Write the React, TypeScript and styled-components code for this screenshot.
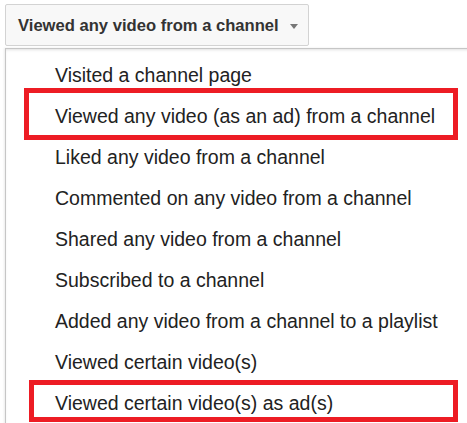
import React from "react";
import styled, { createGlobalStyle } from "styled-components";

const Global = createGlobalStyle`
  html, body { margin: 0; padding: 0; background: #fff; overflow: hidden; }
  body { font-family: "Liberation Sans", Arial, sans-serif; }
`;

const Page = styled.div`
  width: 467px;
  height: 423px;
  padding: 4px 0 0 5px;
  box-sizing: border-box;
  overflow: hidden;
`;

const Trigger = styled.button`
  display: flex;
  align-items: center;
  box-sizing: border-box;
  width: 304px;
  height: 42px;
  margin: 0;
  padding: 1px 0 0 12px;
  background: #f8f8f8;
  border: 1px solid #d3d3d3;
  border-radius: 2px;
  font-family: "Liberation Sans", Arial, sans-serif;
  font-weight: bold;
  font-size: 16.6px;
  color: #333;
  cursor: pointer;
`;

const Caret = styled.span`
  width: 0;
  height: 0;
  margin-left: 11px;
  margin-top: 1px;
  border-left: 4.5px solid transparent;
  border-right: 4.5px solid transparent;
  border-top: 5px solid #777;
`;

const Menu = styled.ul`
  list-style: none;
  margin: 2px -20px 0 0;
  padding: 6px 0 0 0;
  background: #fff;
  border-top: 1px solid #c6c6c6;
  border-left: 1px solid #c6c6c6;
  box-shadow: inset 0 2px 3px -1px rgba(0, 0, 0, 0.12), -1px 0 2px rgba(0, 0, 0, 0.08);
`;

const Item = styled.li`
  position: relative;
  height: 41px;
  line-height: 41px;
  padding-left: 49px;
  font-size: 19.5px;
  color: #222;
  white-space: nowrap;
`;

const Highlight = styled.span<{ $top: number; $left: number; $width: number; $height: number }>`
  position: absolute;
  top: ${(p) => p.$top}px;
  left: ${(p) => p.$left}px;
  width: ${(p) => p.$width}px;
  height: ${(p) => p.$height}px;
  box-sizing: border-box;
  border: 5px solid #ed1c24;
  pointer-events: none;
`;

const items: { label: string; box?: { top: number; left: number; width: number; height: number } }[] = [
  { label: "Visited a channel page" },
  { label: "Viewed any video (as an ad) from a channel", box: { top: -8, left: 18, width: 434, height: 52 } },
  { label: "Liked any video from a channel" },
  { label: "Commented on any video from a channel" },
  { label: "Shared any video from a channel" },
  { label: "Subscribed to a channel" },
  { label: "Added any video from a channel to a playlist" },
  { label: "Viewed certain video(s)" },
  { label: "Viewed certain video(s) as ad(s)", box: { top: -3, left: 23, width: 429, height: 42 } },
];

export default function App() {
  return (
    <>
      <Global />
      <Page>
        <Trigger>
          Viewed any video from a channel
          <Caret />
        </Trigger>
        <Menu>
          {items.map((it) => (
            <Item key={it.label}>
              {it.label}
              {it.box && (
                <Highlight $top={it.box.top} $left={it.box.left} $width={it.box.width} $height={it.box.height} />
              )}
            </Item>
          ))}
        </Menu>
      </Page>
    </>
  );
}
